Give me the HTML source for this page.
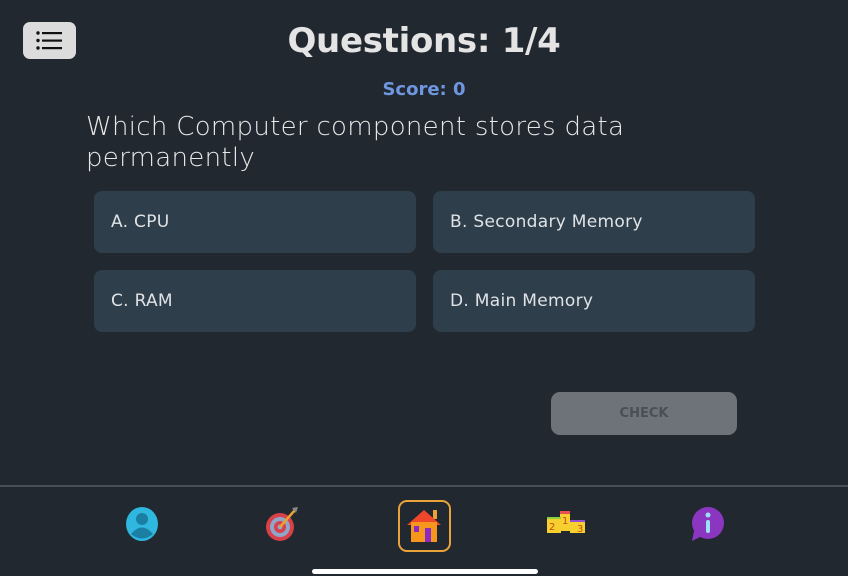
<!DOCTYPE html>
<html><head><meta charset="utf-8"><style>
*{margin:0;padding:0;box-sizing:border-box}
body{width:848px;height:576px;background:#22282f;font-family:"DejaVu Sans","Liberation Sans",sans-serif;position:relative;overflow:hidden;color:#e6e6e6}
.menu{position:absolute;left:23px;top:22px;width:53px;height:37px;background:#dcdcdc;border-radius:7px}
.title{position:absolute;left:0;width:848px;top:21px;text-align:center;font-weight:bold;font-size:34px;color:#e4e4e4;letter-spacing:-0.3px}
.score{position:absolute;left:0;width:848px;top:79px;text-align:center;font-weight:bold;font-size:18px;color:#6f96e0}
.q{position:absolute;left:86px;top:112px;width:640px;font-size:26px;line-height:31px;color:#e8e8e8;letter-spacing:0.3px;font-weight:300}
.opt{position:absolute;width:322px;height:62px;background:#2f3e4b;border-radius:8px;font-size:17px;color:#dfe3e6;padding-left:17px;line-height:62px;letter-spacing:0.3px}
.check{position:absolute;left:551px;top:392px;width:186px;height:43px;background:#6d7378;border-radius:9px;text-align:center;line-height:43px;font-weight:bold;font-size:13px;color:#4a4f54}
.line{position:absolute;left:0;top:485px;width:848px;height:2px;background:#46505a}
.bar{position:absolute;left:312px;top:569px;width:226px;height:5px;background:#fff;border-radius:3px}
.ic{position:absolute;top:505px}
</style></head><body>
<div class="menu"><svg width="53" height="37" viewBox="0 0 53 37"><g fill="#111"><circle cx="15" cy="11" r="1.7"/><circle cx="15" cy="18.5" r="1.7"/><circle cx="15" cy="26" r="1.7"/><rect x="19" y="10" width="20" height="2.2"/><rect x="19" y="17.5" width="20" height="2.2"/><rect x="19" y="25" width="20" height="2.2"/></g></svg></div>
<div class="title">Questions: 1/4</div>
<div class="score">Score: 0</div>
<div class="q">Which Computer component stores data permanently</div>
<div class="opt" style="left:94px;top:191px">A. CPU</div>
<div class="opt" style="left:433px;top:191px">B. Secondary Memory</div>
<div class="opt" style="left:94px;top:270px">C. RAM</div>
<div class="opt" style="left:433px;top:270px">D. Main Memory</div>
<div class="check">CHECK</div>
<div class="line"></div>
<svg class="ic" style="left:122px" width="40" height="40" viewBox="0 0 40 40"><ellipse cx="20" cy="19" rx="16" ry="17" fill="#2fb7e0"/><circle cx="20" cy="14" r="6" fill="#1a7fa3"/><path d="M9 29 Q20 16 31 29 Q20 38 9 29Z" fill="#1a7fa3"/></svg>
<svg class="ic" style="left:263px" width="40" height="40" viewBox="0 0 40 40"><circle cx="17" cy="22" r="14" fill="#d8404a"/><circle cx="17" cy="22" r="10" fill="#8fa6c8"/><circle cx="17" cy="22" r="6" fill="#d8404a"/><circle cx="17" cy="22" r="2.5" fill="#8fa6c8"/><path d="M17 22 L32 5" stroke="#f0a030" stroke-width="2.5"/><path d="M29 3 L35 2 L33 8Z" fill="#888"/></svg>
<div style="position:absolute;left:398px;top:500px;width:53px;height:52px;border:2px solid #e8a33a;border-radius:9px"></div>
<svg class="ic" style="left:404px;top:506px" width="40" height="40" viewBox="0 0 40 40"><rect x="29" y="4" width="4" height="9" fill="#f0a030"/><path d="M3 19 L20 4 L37 19Z" fill="#f0462c"/><rect x="7" y="16" width="26" height="20" fill="#f7961c"/><rect x="10" y="20" width="5" height="6" fill="#8a2ac0"/><rect x="21" y="22" width="6" height="14" fill="#8a2ac0"/></svg>
<svg class="ic" style="left:544px" width="44" height="40" viewBox="0 0 44 40"><rect x="16" y="6" width="10" height="20" fill="#f7d030"/><rect x="16" y="6" width="10" height="3" fill="#e85050"/><rect x="3" y="12" width="14" height="16" fill="#f7d030"/><rect x="3" y="12" width="14" height="2" fill="#8ad040"/><rect x="26" y="15" width="15" height="13" fill="#f7d030"/><rect x="26" y="15" width="15" height="2" fill="#9050d0"/><text x="5" y="25" font-size="10" fill="#c05010">2</text><text x="18" y="19" font-size="10" fill="#c05010">1</text><text x="33" y="27" font-size="10" fill="#c05010">3</text></svg>
<svg class="ic" style="left:688px" width="40" height="40" viewBox="0 0 40 40"><ellipse cx="20" cy="18" rx="16" ry="16" fill="#8a36c0"/><path d="M6 26 L4 36 L14 31Z" fill="#8a36c0"/><circle cx="20" cy="10" r="2.5" fill="#9be0f5"/><rect x="18" y="15" width="4" height="13" rx="2" fill="#9be0f5"/></svg>
<div class="bar"></div>
</body></html>
